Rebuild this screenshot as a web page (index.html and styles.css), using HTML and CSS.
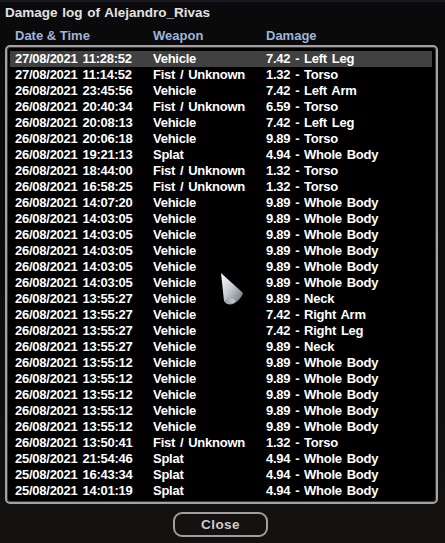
FILE: index.html
```html
<!DOCTYPE html>
<html>
<head>
<meta charset="utf-8">
<link rel="stylesheet" href="styles.css">
</head>
<body>
<div class="win">
  <div class="title">Damage log of Alejandro_Rivas</div>
  <div class="head">
    <span>Date &amp; Time</span><span>Weapon</span><span>Damage</span>
  </div>
  <div class="list">
    <div class="row sel"><span>27/08/2021 11:28:52</span><span>Vehicle</span><span>7.42 - Left Leg</span></div>
    <div class="row"><span>27/08/2021 11:14:52</span><span>Fist / Unknown</span><span>1.32 - Torso</span></div>
    <div class="row"><span>26/08/2021 23:45:56</span><span>Vehicle</span><span>7.42 - Left Arm</span></div>
    <div class="row"><span>26/08/2021 20:40:34</span><span>Fist / Unknown</span><span>6.59 - Torso</span></div>
    <div class="row"><span>26/08/2021 20:08:13</span><span>Vehicle</span><span>7.42 - Left Leg</span></div>
    <div class="row"><span>26/08/2021 20:06:18</span><span>Vehicle</span><span>9.89 - Torso</span></div>
    <div class="row"><span>26/08/2021 19:21:13</span><span>Splat</span><span>4.94 - Whole Body</span></div>
    <div class="row"><span>26/08/2021 18:44:00</span><span>Fist / Unknown</span><span>1.32 - Torso</span></div>
    <div class="row"><span>26/08/2021 16:58:25</span><span>Fist / Unknown</span><span>1.32 - Torso</span></div>
    <div class="row"><span>26/08/2021 14:07:20</span><span>Vehicle</span><span>9.89 - Whole Body</span></div>
    <div class="row"><span>26/08/2021 14:03:05</span><span>Vehicle</span><span>9.89 - Whole Body</span></div>
    <div class="row"><span>26/08/2021 14:03:05</span><span>Vehicle</span><span>9.89 - Whole Body</span></div>
    <div class="row"><span>26/08/2021 14:03:05</span><span>Vehicle</span><span>9.89 - Whole Body</span></div>
    <div class="row"><span>26/08/2021 14:03:05</span><span>Vehicle</span><span>9.89 - Whole Body</span></div>
    <div class="row"><span>26/08/2021 14:03:05</span><span>Vehicle</span><span>9.89 - Whole Body</span></div>
    <div class="row"><span>26/08/2021 13:55:27</span><span>Vehicle</span><span>9.89 - Neck</span></div>
    <div class="row"><span>26/08/2021 13:55:27</span><span>Vehicle</span><span>7.42 - Right Arm</span></div>
    <div class="row"><span>26/08/2021 13:55:27</span><span>Vehicle</span><span>7.42 - Right Leg</span></div>
    <div class="row"><span>26/08/2021 13:55:27</span><span>Vehicle</span><span>9.89 - Neck</span></div>
    <div class="row"><span>26/08/2021 13:55:12</span><span>Vehicle</span><span>9.89 - Whole Body</span></div>
    <div class="row"><span>26/08/2021 13:55:12</span><span>Vehicle</span><span>9.89 - Whole Body</span></div>
    <div class="row"><span>26/08/2021 13:55:12</span><span>Vehicle</span><span>9.89 - Whole Body</span></div>
    <div class="row"><span>26/08/2021 13:55:12</span><span>Vehicle</span><span>9.89 - Whole Body</span></div>
    <div class="row"><span>26/08/2021 13:55:12</span><span>Vehicle</span><span>9.89 - Whole Body</span></div>
    <div class="row"><span>26/08/2021 13:50:41</span><span>Fist / Unknown</span><span>1.32 - Torso</span></div>
    <div class="row"><span>25/08/2021 21:54:46</span><span>Splat</span><span>4.94 - Whole Body</span></div>
    <div class="row"><span>25/08/2021 16:43:34</span><span>Splat</span><span>4.94 - Whole Body</span></div>
    <div class="row"><span>25/08/2021 14:01:19</span><span>Splat</span><span>4.94 - Whole Body</span></div>
  </div>
  <div class="foot">
    <div class="btn">Close</div>
  </div>
  <svg class="cursor" width="26" height="36" viewBox="0 0 26 36">
    <defs>
      <linearGradient id="cg" x1="0" y1="0" x2="1" y2="1">
        <stop offset="0" stop-color="#ffffff"/>
        <stop offset="0.45" stop-color="#c9ccd2"/>
        <stop offset="1" stop-color="#5d6a74"/>
      </linearGradient>
      <linearGradient id="cb" x1="0" y1="0" x2="1" y2="0">
        <stop offset="0" stop-color="#8a96a0"/>
        <stop offset="1" stop-color="#d8dcde"/>
      </linearGradient>
    </defs>
    <path d="M1,1 L4,29 Q8,35 15,31 Q21,27 23,21 Z" fill="url(#cg)"/>
    <ellipse cx="10" cy="29" rx="5" ry="2.5" fill="url(#cb)" opacity="0.8"/>
  </svg>
</div>
</body>
</html>
```
FILE: styles.css
```css
html, body {
  margin: 0;
  padding: 0;
}
body {
  width: 445px;
  height: 543px;
  overflow: hidden;
  background: linear-gradient(#0a0a0c 0%, #0c0b0b 40%, #141210 100%);
  font-family: "Liberation Sans", Arial, sans-serif;
  font-weight: bold;
}
.win {
  position: relative;
  height: 543px;
  border-top: 2px solid #17171d;
  box-sizing: border-box;
}
.title {
  color: #e2e2e2;
  font-size: 13.5px;
  letter-spacing: 0px;
  word-spacing: 1px;
  padding-left: 5px;
  line-height: 16px;
  padding-top: 3px;
  height: 22px;
}
.head {
  display: grid;
  grid-template-columns: 138px 113px 1fr;
  padding-left: 15px;
  color: #9eb5db;
  font-size: 13px;
  line-height: 16px;
  height: 17px;
  padding-top: 1px;
}
.list {
  margin-left: 5px;
  width: 433px;
  box-sizing: border-box;
  border: 2px solid #a2a2a2;
  border-radius: 5px;
  box-shadow: inset 0 0 0 1px #3a3a3a;
  background: #000;
  padding: 4px 4px 3px 3px;
}
.row {
  display: grid;
  grid-template-columns: 138px 113px 1fr;
  padding-left: 5px;
  height: 16px;
  line-height: 16px;
  font-size: 13px;
  letter-spacing: -0.25px;
  word-spacing: 1.5px;
  color: #ffffff;
  white-space: nowrap;
}
.row.sel {
  background: #414141;
}
.foot {
  padding-top: 8px;
  padding-left: 173px;
}
.btn {
  width: 95px;
  height: 25px;
  box-sizing: border-box;
  border: 2px solid #9e9e9e;
  border-radius: 9px;
  color: #cdcdcd;
  font-size: 13.5px;
  letter-spacing: 0.4px;
  line-height: 21px;
  text-align: center;
}
.cursor {
  position: absolute;
  left: 220px;
  top: 270px;
}
```
